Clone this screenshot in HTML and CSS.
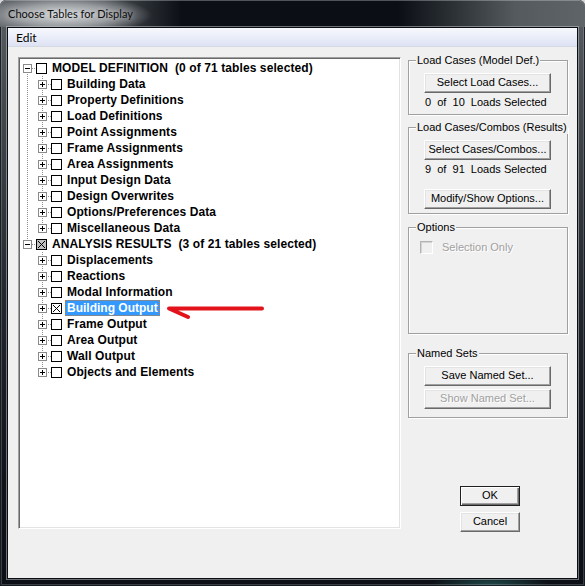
FILE: index.html
```html
<!DOCTYPE html>
<html>
<head>
<meta charset="utf-8">
<title>Choose Tables for Display</title>
<link rel="stylesheet" href="styles.css">
</head>
<body>
<div class="window">
  <div class="titlebar"><span class="title">Choose Tables for Display</span></div>
  <div class="client">
    <div class="menubar"><span class="menu-item">Edit</span></div>
    <div class="body">
      <div class="tree">
        <div class="row root r-first"><span class="exp minus"></span><span class="chk"></span><span class="lbl">MODEL DEFINITION  (0 of 71 tables selected)</span></div>
        <div class="row child g1"><span class="exp plus"></span><span class="chk"></span><span class="lbl">Building Data</span></div>
        <div class="row child g1"><span class="exp plus"></span><span class="chk"></span><span class="lbl">Property Definitions</span></div>
        <div class="row child g1"><span class="exp plus"></span><span class="chk"></span><span class="lbl">Load Definitions</span></div>
        <div class="row child g1"><span class="exp plus"></span><span class="chk"></span><span class="lbl">Point Assignments</span></div>
        <div class="row child g1"><span class="exp plus"></span><span class="chk"></span><span class="lbl">Frame Assignments</span></div>
        <div class="row child g1"><span class="exp plus"></span><span class="chk"></span><span class="lbl">Area Assignments</span></div>
        <div class="row child g1"><span class="exp plus"></span><span class="chk"></span><span class="lbl">Input Design Data</span></div>
        <div class="row child g1"><span class="exp plus"></span><span class="chk"></span><span class="lbl">Design Overwrites</span></div>
        <div class="row child g1"><span class="exp plus"></span><span class="chk"></span><span class="lbl">Options/Preferences Data</span></div>
        <div class="row child g1 last"><span class="exp plus"></span><span class="chk"></span><span class="lbl">Miscellaneous Data</span></div>
        <div class="row root r-last"><span class="exp minus"></span><svg class="chk-svg" width="11" height="11" viewBox="0 0 11 11" shape-rendering="crispEdges"><rect x="0.5" y="0.5" width="10" height="10" fill="#c0c0c0" stroke="#000"/><path d="M2 2h1v1h1v1h1v1h1v-1h1v-1h1v-1h1v1h-1v1h-1v1h-1v1h1v1h1v1h1v1h-1v-1h-1v-1h-1v-1h-1v1h-1v1h-1v1h-1v-1h1v-1h1v-1h1v-1h-1v-1h-1v-1h-1z" fill="#000"/></svg><span class="lbl">ANALYSIS RESULTS  (3 of 21 tables selected)</span></div>
        <div class="row child g2"><span class="exp plus"></span><span class="chk"></span><span class="lbl">Displacements</span></div>
        <div class="row child g2"><span class="exp plus"></span><span class="chk"></span><span class="lbl">Reactions</span></div>
        <div class="row child g2"><span class="exp plus"></span><span class="chk"></span><span class="lbl">Modal Information</span></div>
        <div class="row child g2"><span class="exp plus"></span><svg class="chk-svg" width="11" height="11" viewBox="0 0 11 11" shape-rendering="crispEdges"><rect x="0.5" y="0.5" width="10" height="10" fill="#fff" stroke="#000"/><path d="M2 2h1v1h1v1h1v1h1v-1h1v-1h1v-1h1v1h-1v1h-1v1h-1v1h1v1h1v1h1v1h-1v-1h-1v-1h-1v-1h-1v1h-1v1h-1v1h-1v-1h1v-1h1v-1h1v-1h-1v-1h-1v-1h-1z" fill="#000"/></svg><span class="lbl selected">Building Output</span></div>
        <div class="row child g2"><span class="exp plus"></span><span class="chk"></span><span class="lbl">Frame Output</span></div>
        <div class="row child g2"><span class="exp plus"></span><span class="chk"></span><span class="lbl">Area Output</span></div>
        <div class="row child g2"><span class="exp plus"></span><span class="chk"></span><span class="lbl">Wall Output</span></div>
        <div class="row child g2 last"><span class="exp plus"></span><span class="chk"></span><span class="lbl">Objects and Elements</span></div>
      </div>
      <div class="side">
        <div class="group g-model">
          <div class="group-title">Load Cases (Model Def.)</div>
          <div class="btn">Select Load Cases...</div>
          <div class="info">0  of  10  Loads Selected</div>
        </div>
        <div class="group g-results">
          <div class="group-title">Load Cases/Combos (Results)</div>
          <div class="btn">Select Cases/Combos...</div>
          <div class="info">9  of  91  Loads Selected</div>
          <div class="btn btn-modify">Modify/Show Options...</div>
        </div>
        <div class="group g-options">
          <div class="group-title">Options</div>
          <div class="check-row"><span class="cb-disabled"></span><span class="disabled-text">Selection Only</span></div>
        </div>
        <div class="group g-named">
          <div class="group-title">Named Sets</div>
          <div class="btn">Save Named Set...</div>
          <div class="btn btn-disabled">Show Named Set...</div>
        </div>
        <div class="dlg-buttons">
          <div class="btn btn-small btn-default">OK</div>
          <div class="btn btn-small">Cancel</div>
        </div>
      </div>
    </div>
  </div>
  <svg class="annotation" width="585" height="586" viewBox="0 0 585 586">
    <path d="M262 308.5 L169 308.5 L188 317" fill="none" stroke="#e3131b" stroke-width="4" stroke-linecap="round" stroke-linejoin="round"/>
  </svg>
</div>
</body>
</html>
```

FILE: styles.css
```css
html, body {
  margin: 0;
  padding: 0;
}
body {
  width: 585px;
  height: 586px;
  overflow: hidden;
  background: #d8d8d8;
}
.window {
  position: relative;
  width: 585px;
  height: 586px;
  box-sizing: border-box;
  padding: 0 7px 7px 7px;
  display: flex;
  flex-direction: column;
  border-radius: 6px 6px 0 0;
  background:
    radial-gradient(ellipse 60px 14px at 490px 586px, rgba(60,150,140,0.45), transparent 100%),
    linear-gradient(to bottom, #5a5f64 0, #464b50 90px, #22272d 300px, #10141a 480px, #0c1016 586px);
  box-shadow: inset 0 0 0 1px rgba(20,24,30,0.9), inset 0 0 0 2px rgba(200,205,210,0.25);
}
.titlebar {
  height: 27px;
  margin: 0 -7px;
  border-radius: 6px 6px 0 0;
  display: flex;
  align-items: center;
  background:
    radial-gradient(ellipse 88px 20px at 64px 15px, rgba(222,224,226,0.95) 0, rgba(185,188,191,0.7) 55%, rgba(120,124,128,0) 100%),
    linear-gradient(to right, #585d62 0, #4a4f54 18%, #0c1016 31%, #0b0f15 68%, #2e3338 78%, #555a5f 88%, #5f6468 100%);
  box-shadow: inset 0 1px 0 rgba(210,215,220,0.35);
}
.title {
  margin-left: 8px;
  font-family: "Lato", "Open Sans", sans-serif;
  font-size: 11px;
  letter-spacing: 0.05px;
  color: #0c0c0c;
  text-shadow: 0 0 6px rgba(255,255,255,0.6);
}
.client {
  flex: 1;
  background: #f0f0f0;
  border: 1px solid #0a0d11;
  box-shadow: 0 0 0 1px rgba(190,195,200,0.55);
  display: flex;
  flex-direction: column;
  min-height: 0;
}
.menubar {
  height: 18px;
  border-bottom: 1px solid #d5d9e3;
  background: linear-gradient(to bottom, #f7f8fd 0, #eceffa 45%, #dde2f3 100%);
  display: flex;
  align-items: center;
}
.menu-item {
  margin-left: 8px;
  font-family: "Lato", "Open Sans", sans-serif;
  font-size: 12px;
  color: #000;
  margin-top: 1px;
}
.body {
  flex: 1;
  display: flex;
  align-items: flex-start;
}
/* tree */
.tree {
  --vd: repeating-linear-gradient(to bottom, #8e8e8e 0 1px, transparent 1px 2px);
  --hd: repeating-linear-gradient(to right, #8e8e8e 0 1px, transparent 1px 2px);
  margin: 10px 0 0 10px;
  width: 383px;
  height: 472px;
  box-sizing: border-box;
  background: #fff;
  border: 1px solid;
  border-color: #a0a0a0 #fff #fff #a0a0a0;
  box-shadow: inset 1px 1px 0 #696969, inset -1px -1px 0 #e3e3e3;
  padding: 2px 1px 1px 1px;
  font-family: "Liberation Sans", Arial, sans-serif;
  font-weight: bold;
  font-size: 12px;
}
.row {
  height: 16px;
  display: flex;
  align-items: flex-start;
  white-space: pre;
  background-repeat: no-repeat;
}
.row.root { padding-left: 3px; }
.row.child { padding-left: 18px; }
.row.r-first {
  background-image: var(--hd), var(--vd);
  background-position: 8px 8px, 7px 8px;
  background-size: 8px 1px, 1px 8px;
}
.row.r-last {
  background-image: var(--hd), var(--vd);
  background-position: 8px 8px, 7px 0;
  background-size: 8px 1px, 1px 9px;
}
.row.g1 {
  background-image: var(--hd), var(--vd), var(--vd);
  background-position: 22px 8px, 22px 0, 7px 0;
  background-size: 9px 1px, 1px 16px, 1px 16px;
}
.row.g1.last {
  background-size: 9px 1px, 1px 9px, 1px 16px;
}
.row.g2 {
  background-image: var(--hd), var(--vd);
  background-position: 22px 8px, 22px 0;
  background-size: 9px 1px, 1px 16px;
}
.row.g2.last {
  background-size: 9px 1px, 1px 9px;
}
.exp {
  width: 9px;
  height: 9px;
  margin-top: 4px;
  box-sizing: border-box;
  border: 1px solid #8a8a8a;
  background-color: #fff;
  background-repeat: no-repeat;
  flex: none;
}
.exp.minus {
  background-image: linear-gradient(#000, #000);
  background-position: 1px 3px;
  background-size: 5px 1px;
}
.exp.plus {
  background-image: linear-gradient(#000, #000), linear-gradient(#000, #000);
  background-position: 1px 3px, 3px 1px;
  background-size: 5px 1px, 1px 5px;
}
.chk {
  width: 11px;
  height: 11px;
  margin-top: 3px;
  margin-left: 4px;
  box-sizing: border-box;
  border: 1px solid #000;
  background: #fff;
  flex: none;
}
.chk-svg {
  display: block;
  margin-top: 3px;
  margin-left: 4px;
  flex: none;
}
.lbl {
  margin-left: 3px;
  padding: 0 2px;
  line-height: 16px;
  height: 16px;
  color: #000;
  letter-spacing: 0.1px;
}
.lbl.selected {
  background: #3399ff;
  color: #fff;
  outline: 1px dotted #c9782e;
  outline-offset: -1px;
  letter-spacing: 0;
}
/* side panel */
.side {
  margin-left: 7px;
  width: 160px;
  font-family: "Liberation Sans", Arial, sans-serif;
  font-size: 11px;
  color: #000;
}
.group {
  border: 1px solid #a0a0a0;
  box-shadow: inset 1px 1px 0 #fff, 1px 1px 0 #fff;
  padding: 0 0 4px 15px;
  box-sizing: border-box;
}
.group-title {
  width: fit-content;
  margin: -8px 0 0 -8px;
  padding: 0 1px;
  line-height: 14px;
  height: 14px;
  background: #f0f0f0;
  white-space: nowrap;
}
.g-model { margin-top: 13px; padding-bottom: 5px; }
.g-results { margin-top: 12px; padding-bottom: 4px; }
.g-options { margin-top: 13px; height: 107px; }
.g-named { margin-top: 19px; padding-bottom: 8px; }
.btn {
  width: 127px;
  height: 20px;
  box-sizing: border-box;
  margin-top: 6px;
  border: 1px solid;
  border-color: #fff #696969 #696969 #fff;
  box-shadow: inset -1px -1px 0 #a0a0a0, inset 1px 1px 0 #e3e3e3;
  background: #f0f0f0;
  text-align: center;
  line-height: 17px;
  white-space: nowrap;
}
.btn-modify { margin-top: 13px; }
.g-named .btn + .btn { margin-top: 3px; }
.btn-disabled {
  color: #a0a0a0;
  text-shadow: 1px 1px 0 #fff;
}
.info {
  margin-top: 2px;
  line-height: 14px;
  height: 14px;
  white-space: pre;
  padding-left: 1px;
}
.check-row {
  margin-top: 6px;
  margin-left: -4px;
  height: 14px;
  display: flex;
  align-items: center;
}
.cb-disabled {
  width: 13px;
  height: 13px;
  box-sizing: border-box;
  border: 1px solid;
  border-color: #b4b4b4 #fff #fff #b4b4b4;
  box-shadow: inset 1px 1px 0 #d4d4d4;
  background: #f0f0f0;
  margin-top: 1px;
}
.disabled-text {
  margin-left: 9px;
  color: #a0a0a0;
  text-shadow: 1px 1px 0 #fff;
}
.dlg-buttons {
  margin-top: 68px;
  margin-left: 52px;
}
.btn-small {
  width: 60px;
  margin-top: 6px;
}
.btn-default {
  margin-top: 0;
  border: 1px solid #202020;
  box-shadow: inset 1px 1px 0 #fff, inset -1px -1px 0 #696969, inset -2px -2px 0 #a0a0a0;
}
.annotation {
  position: absolute;
  left: 0;
  top: 0;
  pointer-events: none;
}
```
